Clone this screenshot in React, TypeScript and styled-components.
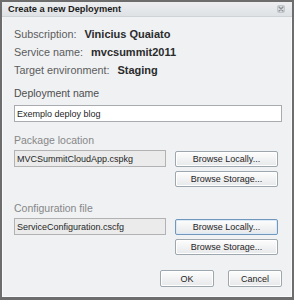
import React from "react";
import styled, { createGlobalStyle } from "styled-components";

const Global = createGlobalStyle`
  html, body { margin: 0; padding: 0; background: #6e6e6e; }
  * { box-sizing: border-box; }
`;

const Dialog = styled.div`
  width: 294px;
  height: 300px;
  border: 2px solid #6d6d6d;
  border-bottom-width: 3px;
  background: #eff1f3;
  box-shadow: inset 0 0 0 1px #f9fafb;
  display: flex;
  flex-direction: column;
  font-family: "Liberation Sans", Arial, sans-serif;
`;

const TitleBar = styled.div`
  height: 15px;
  flex: none;
  display: flex;
  align-items: center;
  justify-content: space-between;
  padding: 0 7px 0 6px;
  background: linear-gradient(#eceef0, #dfe2e5);
  border-bottom: 1px solid #cfd3d7;
`;

const Title = styled.span`
  font-size: 9.3px;
  font-weight: bold;
  color: #1c1c1c;
`;

const Body = styled.div`
  padding: 0 10px 0 12px;
  display: flex;
  flex-direction: column;
`;

const InfoList = styled.div`
  margin-top: 8px;
  display: flex;
  flex-direction: column;
`;

const InfoRow = styled.div`
  height: 18px;
  display: flex;
  align-items: center;
  gap: 8px;
  white-space: nowrap;
`;

const InfoLabel = styled.span`
  font-size: 10.8px;
  color: #5c5c5c;
`;

const InfoValue = styled.span`
  font-size: 11px;
  font-weight: bold;
  color: #2b2b2b;
`;

const FieldLabel = styled.div<{ $muted?: boolean; $top: number }>`
  height: 14px;
  line-height: 14px;
  margin-top: ${(p) => p.$top}px;
  font-size: 10.5px;
  color: ${(p) => (p.$muted ? "#878787" : "#4e4e4e")};
`;

const TextInput = styled.input`
  margin-top: 5px;
  height: 17px;
  width: 100%;
  border: 1px solid #a8abb0;
  background: #ffffff;
  padding: 0 2px;
  font-family: "Liberation Sans", Arial, sans-serif;
  font-size: 9px;
  color: #1e1e1e;
  outline: none;
`;

const FileRow = styled.div`
  margin-top: 3px;
  display: flex;
  align-items: flex-start;
  gap: 9px;
`;

const ReadOnlyBox = styled.div`
  width: 152px;
  height: 17px;
  border: 1px solid #b2b2b2;
  background: #ebebeb;
  padding: 0 2px;
  display: flex;
  align-items: center;
  font-size: 9px;
  color: #262626;
  white-space: nowrap;
`;

const ButtonColumn = styled.div`
  margin-top: 1px;
  display: flex;
  flex-direction: column;
  gap: 4px;
`;

const Button = styled.button<{ $width: number; $height?: number; $focused?: boolean }>`
  width: ${(p) => p.$width}px;
  height: ${(p) => p.$height ?? 16}px;
  padding: 0;
  border: 1px solid ${(p) => (p.$focused ? "#7297bd" : "#9ea6ae")};
  border-radius: 2px;
  background: linear-gradient(#fdfdfd, #e7e8ea);
  box-shadow: ${(p) => (p.$focused ? "inset 0 0 0 1px #dceaf7" : "inset 0 0 0 1px #ffffff")};
  font-family: "Liberation Sans", Arial, sans-serif;
  font-size: 9px;
  color: #1e1e1e;
  display: flex;
  align-items: center;
  justify-content: center;
`;

const Footer = styled.div`
  margin-top: 15px;
  display: flex;
  justify-content: flex-end;
  gap: 14px;
`;

const CloseIcon = () => (
  <svg width="8" height="8" viewBox="0 0 8 8">
    <rect x="0.5" y="0.5" width="7" height="7" rx="1" fill="#d9dcdf" stroke="#c2c6ca" />
    <path d="M2 2 L6 6 M6 2 L2 6" stroke="#8f9499" strokeWidth="1.4" strokeLinecap="round" />
  </svg>
);

export default function App() {
  return (
    <>
      <Global />
      <Dialog>
        <TitleBar>
          <Title>Create a new Deployment</Title>
          <CloseIcon />
        </TitleBar>
        <Body>
          <InfoList>
            <InfoRow>
              <InfoLabel>Subscription:</InfoLabel>
              <InfoValue>Vinicius Quaiato</InfoValue>
            </InfoRow>
            <InfoRow>
              <InfoLabel>Service name:</InfoLabel>
              <InfoValue>mvcsummit2011</InfoValue>
            </InfoRow>
            <InfoRow>
              <InfoLabel>Target environment:</InfoLabel>
              <InfoValue>Staging</InfoValue>
            </InfoRow>
          </InfoList>

          <FieldLabel $top={7}>Deployment name</FieldLabel>
          <TextInput defaultValue="Exemplo deploy blog" />

          <FieldLabel $top={11} $muted>Package location</FieldLabel>
          <FileRow>
            <ReadOnlyBox>MVCSummitCloudApp.cspkg</ReadOnlyBox>
            <ButtonColumn>
              <Button $width={103}>Browse Locally...</Button>
              <Button $width={103}>Browse Storage...</Button>
            </ButtonColumn>
          </FileRow>

          <FieldLabel $top={14} $muted>Configuration file</FieldLabel>
          <FileRow>
            <ReadOnlyBox>ServiceConfiguration.cscfg</ReadOnlyBox>
            <ButtonColumn>
              <Button $width={103} $focused>Browse Locally...</Button>
              <Button $width={103}>Browse Storage...</Button>
            </ButtonColumn>
          </FileRow>

          <Footer>
            <Button $width={54} $height={17}>OK</Button>
            <Button $width={54} $height={17}>Cancel</Button>
          </Footer>
        </Body>
      </Dialog>
    </>
  );
}
